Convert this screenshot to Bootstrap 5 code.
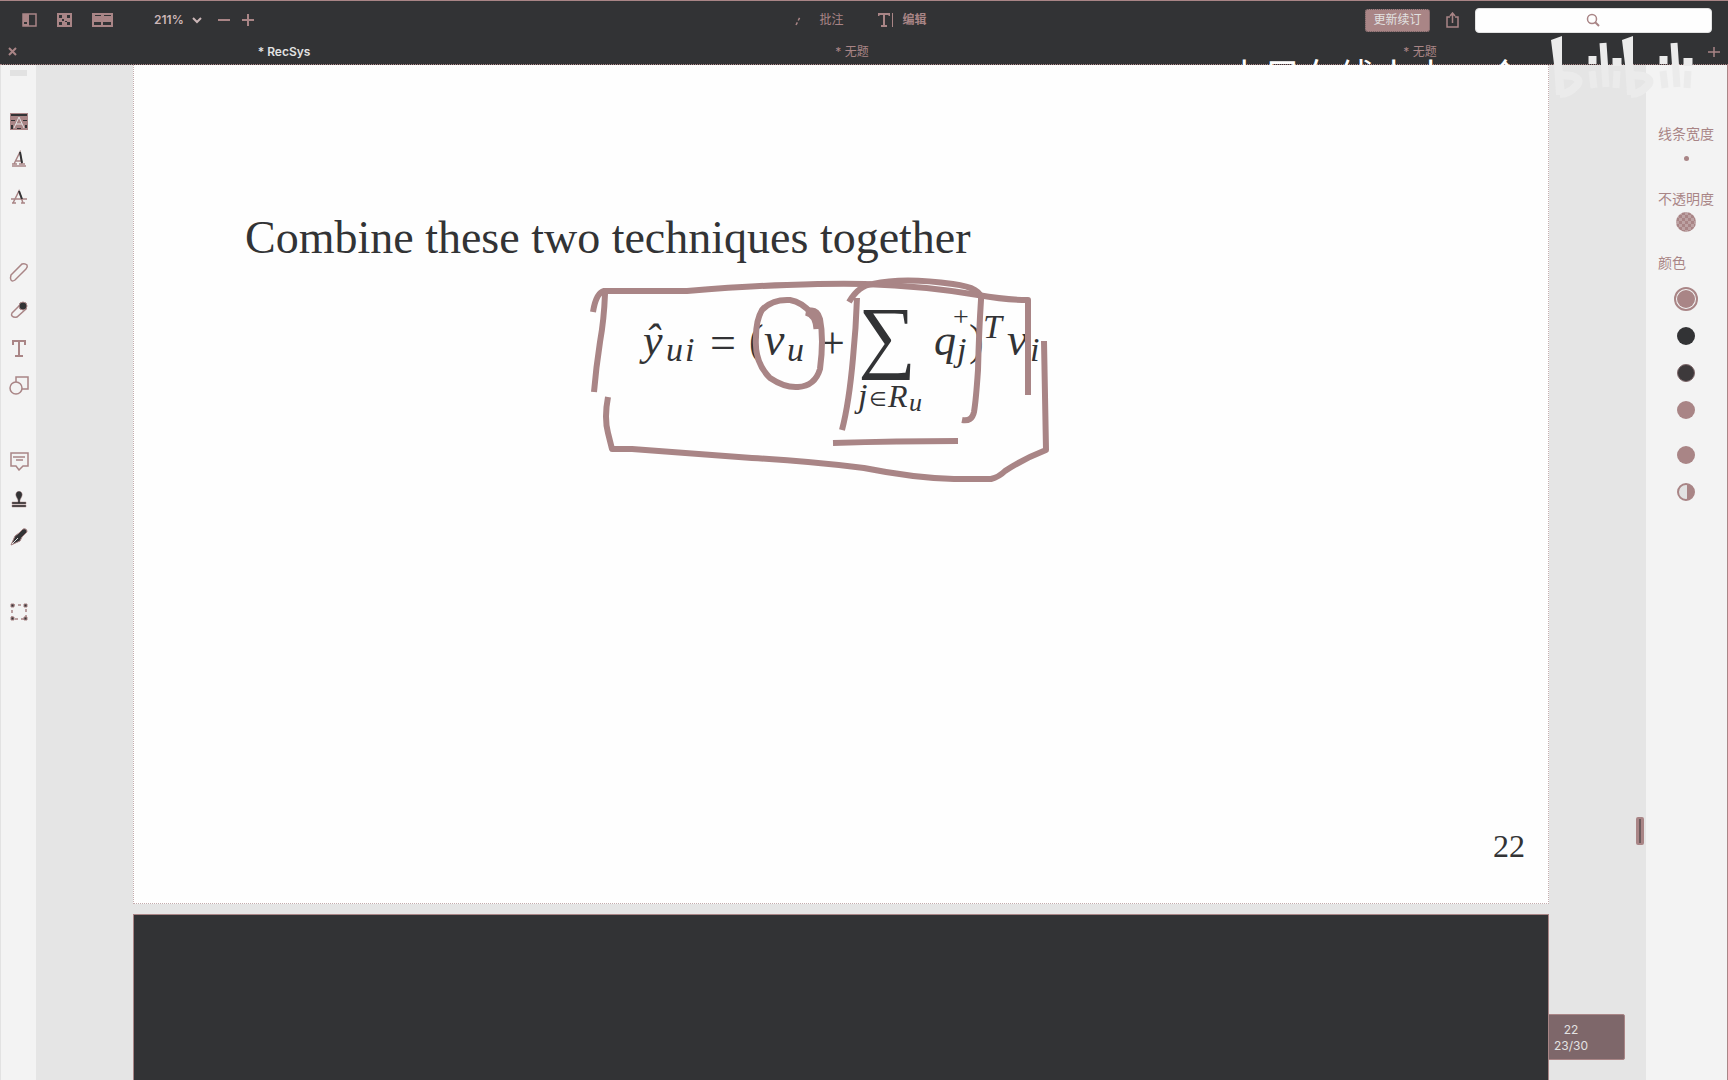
<!DOCTYPE html>
<html lang="zh-CN">
<head>
<meta charset="utf-8">
<meta name="viewport" content="width=device-width, initial-scale=1">
<title>RecSys</title>
<link href="https://cdn.jsdelivr.net/npm/bootstrap@5.3.0/dist/css/bootstrap.min.css" rel="stylesheet">
<style>
:root{--ink:#323335;--rose:#a98586;--mist:#e2e2e2;--panel:#f3f3f3;--paper:#fefefe}
body{font-family:Inter,"Noto Sans CJK SC",sans-serif;font-size:12px;line-height:16px;color:var(--rose);background:var(--mist)}
button{background:none;border:0;padding:0;color:inherit;font:inherit;display:inline-flex;align-items:center;justify-content:center}
svg{display:block;flex:none}
.line{fill:none;stroke:currentColor;stroke-width:1.5}
.heavy{stroke-width:2}
.topbar{background:var(--ink);border-top:1px solid var(--rose)}
.tools{height:38px;padding:0 16px 0 22px}
.side-group{flex:1 1 0}
.modes{gap:34px;padding-right:12px}
.zoomlabel{color:#cbb6b7;font-weight:600;margin-left:41px}
.refresh{background:var(--rose);color:var(--mist);width:65px;height:23px;border-radius:3px;border:1px dotted #6d5b5d}
.search{position:relative;width:237px;height:25px}
.search input{width:100%;height:25px;border:1px solid var(--mist);border-radius:4px;background:var(--paper);padding:0 8px;display:block}
.search svg{position:absolute;left:111px;top:5px;pointer-events:none}
.tabs{height:26px;border-bottom:1px dotted var(--rose)}
.doc-tab{flex:1 1 0;position:relative}
.doc-tab.current{color:var(--mist);font-weight:600}
.shut{position:absolute;left:8px;top:8px;color:var(--rose)}
.rail{width:36px;background:var(--panel);border-left:1px solid var(--mist)}
.rail button{width:36px;height:38px;flex:none}
.grip{width:17px;height:6px;margin:5px 0 26px 9px;background:var(--mist)}
.rail-gap{height:37px;flex:none}
.stage{background:#e5e5e5;padding:0 97px;min-width:0}
.slide{background:var(--paper);min-height:839px;border:1px dotted #c4adae;border-top:0;position:relative}
.slide h1{font:400 46px/64px "Liberation Serif",serif;color:var(--ink);margin:0;padding:141px 0 0 111px}
.slide footer{position:absolute;right:23px;bottom:41px;font:32px/32px "Liberation Serif",serif;color:var(--ink)}
.next-slide{background:var(--ink);border:1px solid var(--rose);border-bottom:0;margin-top:10px;position:relative;z-index:2}
.formula{margin:0 auto;font-family:"Liberation Serif",serif;font-style:italic;fill:var(--ink)}
.upright{font-style:normal}
.ink{fill:none;stroke:var(--rose);stroke-width:6;stroke-linejoin:round;stroke-linecap:butt}
.thumb{position:absolute;right:2px;top:752px;width:8px;height:28px;border-radius:2px;background:#6d5b5d;border:2px solid var(--rose);border-left-width:3px;border-right-width:3px}
.pageno{position:absolute;right:21px;bottom:20px;width:108px;height:46px;padding-top:7px;background:#7e676a;border:1px solid var(--rose);color:var(--mist);font-size:12px;text-align:center;border-radius:2px}
.props{width:82px;background:var(--panel);border-right:1px solid var(--rose);padding:59px 12px 0;font-size:14px}
.props button{height:37px;width:56px}
.props .thin{height:28px;margin-bottom:17px}
.props .opacity-pick{height:26px}
.cap{line-height:20px;width:56px;white-space:nowrap;margin:0}
.cap-colour{margin:18px 0 7px}
.dot{display:block;width:18px;height:18px;border-radius:50%;background:var(--rose)}
.tiny{width:5px;height:5px}
.mottled{width:20px;height:20px;background:repeating-conic-gradient(#bda2a3 0 25%,var(--rose) 0 50%) 0 0/6px 6px}
.chosen{outline:2px solid var(--rose);outline-offset:1px}
.black{background:var(--ink)}
.charcoal{background:#3d393b;border:1px solid #7e676a}
.half{background:linear-gradient(90deg,var(--mist) 60%,var(--rose) 60%);border:2px solid var(--rose)}
.watermark{position:absolute;left:1227px;top:55px;pointer-events:none;z-index:5;font:37px/40px "Noto Sans CJK SC",sans-serif;color:var(--paper);white-space:nowrap}
.brand{position:absolute;left:1550px;top:34px;z-index:6;pointer-events:none}
</style>
<script src="https://cdn.jsdelivr.net/npm/bootstrap@5.3.0/dist/js/bootstrap.bundle.min.js"></script>
</head>
<body class="vh-100 d-flex flex-column overflow-hidden position-relative">
<header class="topbar">
  <div class="tools d-flex align-items-center">
    <div class="side-group d-flex align-items-center">
      <button aria-label="侧边栏"><svg width="15" height="14"><path class="line" d="M1 1h13v12H1z"/><path fill="currentColor" d="M1 1h6v12H1z"/><path fill="#323335" d="M2 9h3v2H2z"/></svg></button>
      <button class="ms-3 ps-1" aria-label="缩略图"><svg width="15" height="14"><path fill="currentColor" d="M0 0h15v14H0z"/><path fill="#323335" d="M2 2h3v3H2zM10 2h3v3h-3zM2 9h3v3H2zM10 9h3v3h-3zM5 6h2v2H5zM8 8h2v1H8z"/></svg></button>
      <button class="ms-3 ps-1" aria-label="双页"><svg width="21" height="14"><path fill="currentColor" d="M0 0h21v14H0z"/><path fill="#323335" d="M3 2h6v1H3zM12 2h7v1h-7zM2 9h7v3H2zM11 9h8v3h-8z"/></svg></button>
      <button class="zoomlabel">211%<svg class="ms-2" width="10" height="8"><path class="line heavy" d="M1 2l4 4 4-4"/></svg></button>
      <button class="ms-3" aria-label="缩小"><svg width="12" height="12"><path class="line heavy" d="M0 6h12"/></svg></button>
      <button class="ms-2 ps-1" aria-label="放大"><svg width="12" height="12"><path class="line heavy" d="M0 6h12M6 0v12"/></svg></button>
    </div>
    <div class="modes d-flex align-items-center">
      <button><svg width="8" height="12" class="me-3"><path class="line" stroke-dasharray="3 2" d="M1 11l4-8"/></svg>批注</button>
      <button class="fw-bold"><svg width="17" height="14" class="me-2"><path fill="currentColor" d="M0 0h12v3h-1l-1-1H7v10h2v2H3v-2h2V2H2L1 3H0zM14 0h1v14h-1z"/></svg>编辑</button>
    </div>
    <div class="side-group d-flex align-items-center justify-content-end">
      <button class="refresh">更新续订</button>
      <button class="mx-3" aria-label="分享"><svg width="13" height="16"><path class="line" d="M4 5H1v10h11V5H9M6.500 11V2M4 4l2.500-3L9 4"/></svg></button>
      <div class="search"><input type="search" aria-label="搜索"><svg width="14" height="14"><circle class="line" cx="6" cy="6" r="4.500"/><path class="line heavy" d="M9 9l4 4"/></svg></div>
    </div>
  </div>
  <nav class="tabs d-flex align-items-stretch" aria-label="文档">
    <button class="doc-tab current">* RecSys<svg class="shut" width="9" height="9"><path class="line heavy" d="M1 1l7 7M8 1L1 8"/></svg></button>
    <button class="doc-tab">* 无题</button>
    <button class="doc-tab">* 无题</button>
    <button class="px-1 me-1" aria-label="新建"><svg width="12" height="12"><path class="line" d="M0 6h12M6 1v10"/></svg></button>
  </nav>
</header>
<main class="d-flex flex-grow-1 overflow-hidden">
  <aside class="rail d-flex flex-column">
    <div class="grip"></div>
    <button aria-label="高亮"><svg width="18" height="17"><path fill="currentColor" d="M0 0h18v17H0z"/><path fill="#323335" d="M1 1h16v2H1zM1 7h4v1H1zM13 7h4v1h-4zM1 12h2v4H1zM15 12h2v3h-2zM7 15h4v1H7z"/><path fill="none" stroke="#e2e2e2" d="M4 15l5-11 5 11M6 11h6"/></svg></button>
    <button aria-label="下划线"><svg width="16" height="18"><path class="line" d="M1 16h14M3 14l6-12 2 12M5 11h6M1 14h5M8 14h6"/><path stroke="#323335" stroke-width="2" d="M9 2l2 11"/></svg></button>
    <button aria-label="删除线"><svg width="16" height="16"><path class="line" d="M0 10h16M2 14L8 2l4 12M1 14h4M10 14h4"/><path stroke="#323335" stroke-width="2" d="M8 2l3 8"/></svg></button>
    <div class="rail-gap"></div>
    <button aria-label="铅笔"><svg width="20" height="20"><path class="line" d="M2 13L13 2q3-1 5 1 1 2-1 4L6 18q-3 2-4 0-1-2 0-5z"/></svg></button>
    <button aria-label="橡皮"><svg width="18" height="18"><path class="line" d="M2 12l9-9 5 5-9 8q-3 1-5-1-1-1 0-3z"/><circle fill="#323335" stroke="currentColor" cx="13" cy="5" r="4"/></svg></button>
    <button aria-label="文本"><svg width="16" height="17"><path fill="currentColor" d="M1 0h14v5h-2V2H9v13h3v2H4v-2h3V2H3v3H1z"/></svg></button>
    <button aria-label="形状"><svg width="20" height="20"><path class="line" d="M7 6V1h12v12h-6"/><circle class="line" cx="7" cy="12" r="6"/></svg></button>
    <div class="rail-gap"></div>
    <button aria-label="便笺"><svg width="19" height="19"><path class="line" d="M1 1h17v13h-5l-4 4-3-4H1zM3 5h12M6 8h7"/></svg></button>
    <button aria-label="图章"><svg width="16" height="17"><path fill="#323335" stroke="currentColor" stroke-width=".5" d="M8 0q4 1 3 5L9 9v2h6v2H1v-2h6V9L5 5q-1-4 3-5zM1 14h14v2H1z"/></svg></button>
    <button aria-label="签名"><svg width="18" height="18"><path fill="#323335" stroke="currentColor" d="M1 17l4-9 4-3 4-4q4-1 4 3l-5 5-2 4z"/><path stroke="#e2e2e2" d="M2 16l6-6"/></svg></button>
    <div class="rail-gap"></div>
    <button aria-label="选择"><svg width="18" height="18"><path class="line" stroke-dasharray="3 3" d="M2 2h14v14H2z"/><path fill="#323335" stroke="currentColor" d="M1 1h3v3H1zM14 1h3v3h-3zM1 14h3v3H1zM14 14h3v3h-3z"/></svg></button>
  </aside>
  <section class="stage flex-grow-1 d-flex flex-column position-relative">
    <article class="slide">
      <h1>Combine these two techniques together</h1>
      <svg class="formula" width="520" height="220" role="img" aria-label="公式">
        <text x="62" y="85" font-size="44">ŷ</text>
        <text x="85" y="91" font-size="34">u</text><text x="104" y="91" font-size="34">i</text>
        <text x="129" y="88" font-size="46" class="upright">=</text>
        <text x="168" y="85" font-size="44" class="upright">(</text>
        <text x="183" y="85" font-size="46">v</text><text x="206" y="91" font-size="34">u</text>
        <text x="239" y="88" font-size="44" class="upright">+</text>
        <text x="277" y="93" font-size="81" class="upright">∑</text>
        <text x="353" y="85" font-size="44">q</text><text x="372" y="56" font-size="28" class="upright">+</text><text x="376" y="91" font-size="34">j</text>
        <text x="388" y="85" font-size="44" class="upright">)</text>
        <text x="402" y="68" font-size="34">T</text>
        <text x="426" y="85" font-size="46">v</text><text x="449" y="91" font-size="34">i</text>
        <text x="277" y="137" font-size="34">j</text><text x="288" y="136" font-size="20" class="upright" font-family="DejaVu Sans">∈</text><text x="307" y="137" font-size="32">R</text><text x="328" y="141" font-size="26">u</text>
        <g class="ink">
          <path d="M12 42q3-19 11-21h83q60-5 100-6 50-2 78-1 60 2 113 11 28 5 50 5v95"/>
          <path d="M24 24q-1 26-5 48-4 26-6 50M27 127q-4 21 0 36l4 16h20l120 9q55 3 112 10 50 10 90 11h37q8-2 14-8 18-12 41-21-1-50-2-109"/>
          <path d="M231 44q-10-12-22-14-18-1-28 10-6 10-6 27-2 25 14 41 15 10 28 9 17-1 22-18 4-30 0-50-3-10-11-8"/>
          <path stroke-width="9" d="M225 41q11 2 12 18"/>
          <path stroke-width="4" d="M464 102v14"/>
          <path d="M268 32q10-17 24-18 30-7 80 0 30 4 28 16-2 30-3 70-2 30-4 42-2 10-12 8M276 28q-1 30-4 60-4 45-11 72M252 173q65-2 125-2"/>
        </g>
      </svg>
      <footer>22</footer>
    </article>
    <article class="next-slide flex-grow-1" aria-label="下一页"></article>
    <div class="pageno">22<br>23/30</div>
    <div class="thumb"></div>
  </section>
  <aside class="props d-flex flex-column">
    <p class="cap">线条宽度</p>
    <button class="thin" aria-label="线条宽度 1"><span class="dot tiny"></span></button>
    <p class="cap">不透明度</p>
    <button class="opacity-pick" aria-label="不透明度 100"><span class="dot mottled"></span></button>
    <p class="cap cap-colour">颜色</p>
    <button aria-label="红"><span class="dot chosen"></span></button>
    <button aria-label="黑"><span class="dot black"></span></button>
    <button aria-label="深灰"><span class="dot charcoal"></span></button>
    <button class="mb-2" aria-label="玫瑰"><span class="dot"></span></button>
    <button aria-label="粉"><span class="dot"></span></button>
    <button aria-label="自定义"><span class="dot half"></span></button>
  </aside>
</main>
<div class="watermark">上目在线小小一个</div>
<svg class="brand" width="178" height="66" role="img" aria-label="bilibili">
  <g id="half" fill="none" stroke="#ebebeb">
    <path fill="#ebebeb" stroke="none" d="M1 6L12 2v27l3 32H6L4 30z"/>
    <path stroke-width="8" d="M10 41l12 1q12 4 2 12-6 6-14 6"/>
    <path stroke-width="7" d="M53 9l3 44M43 22v8M42 37l2 17M66 24v8M67 37l-1 17"/>
    <path stroke-width="3" d="M40 22v8M70 24v8"/>
  </g>
  <use href="#half" x="71"/>
</svg>
</body>
</html>
